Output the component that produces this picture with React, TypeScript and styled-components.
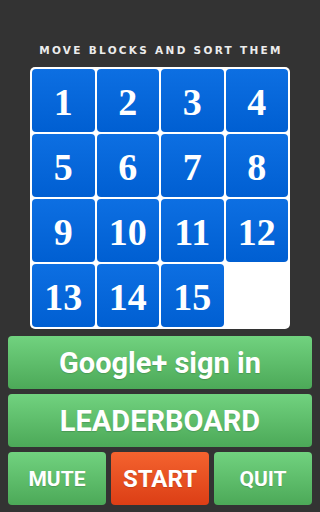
import styled, { createGlobalStyle } from "styled-components";

const GlobalStyle = createGlobalStyle`
  html, body {
    margin: 0;
    padding: 0;
    background: #333333;
  }
`;

const Screen = styled.div`
  width: 320px;
  height: 512px;
  background: #333333;
  display: flex;
  flex-direction: column;
  align-items: center;
  box-sizing: border-box;
  padding-top: 44px;
`;

const Title = styled.div`
  font-family: "DejaVu Sans", sans-serif;
  font-weight: bold;
  font-size: 10.5px;
  letter-spacing: 2.3px;
  line-height: 13px;
  color: #ececec;
  text-transform: uppercase;
  margin-bottom: 10px;
  margin-left: 2px;
  white-space: nowrap;
`;

const Board = styled.div`
  width: 260px;
  height: 262px;
  box-sizing: border-box;
  padding: 2px;
  background: #ffffff;
  border-radius: 5px;
  display: grid;
  grid-template-columns: repeat(4, 1fr);
  grid-template-rows: repeat(4, 1fr);
  gap: 2px;
`;

const Tile = styled.div<{ $empty?: boolean }>`
  border-radius: 4px;
  background: ${(p) =>
    p.$empty ? "transparent" : "linear-gradient(#0d6fe2, #005fd2)"};
  display: flex;
  align-items: center;
  justify-content: center;
  font-family: "Liberation Serif", serif;
  font-weight: bold;
  font-size: 38px;
  color: #ffffff;
  padding-top: 2px;
  box-sizing: border-box;
`;

const Buttons = styled.div`
  width: 304px;
  display: flex;
  flex-direction: column;
  gap: 5px;
  margin-top: 7px;
`;

const Row = styled.div`
  display: grid;
  grid-template-columns: repeat(3, 1fr);
  gap: 5px;
`;

const Button = styled.div<{ $size: number; $red?: boolean }>`
  height: 53px;
  border-radius: 4px;
  background: ${(p) =>
    p.$red
      ? "linear-gradient(#f4632f, #dc3e15)"
      : "linear-gradient(#71d27f, #4ca958)"};
  display: flex;
  align-items: center;
  justify-content: center;
  font-family: Roboto, "Liberation Sans", sans-serif;
  font-weight: bold;
  font-size: ${(p) => p.$size}px;
  color: #ffffff;
  text-shadow: 0 1px 1px rgba(0, 0, 0, 0.15);
`;

const tiles = [1, 2, 3, 4, 5, 6, 7, 8, 9, 10, 11, 12, 13, 14, 15, 0];

export default function App() {
  return (
    <>
      <GlobalStyle />
      <Screen>
        <Title>Move blocks and sort them</Title>
        <Board>
          {tiles.map((n) => (
            <Tile key={n} $empty={n === 0}>
              {n === 0 ? "" : n}
            </Tile>
          ))}
        </Board>
        <Buttons>
          <Button $size={29}>Google+ sign in</Button>
          <Button $size={29}>LEADERBOARD</Button>
          <Row>
            <Button $size={21}>MUTE</Button>
            <Button $size={24} $red>
              START
            </Button>
            <Button $size={21}>QUIT</Button>
          </Row>
        </Buttons>
      </Screen>
    </>
  );
}
